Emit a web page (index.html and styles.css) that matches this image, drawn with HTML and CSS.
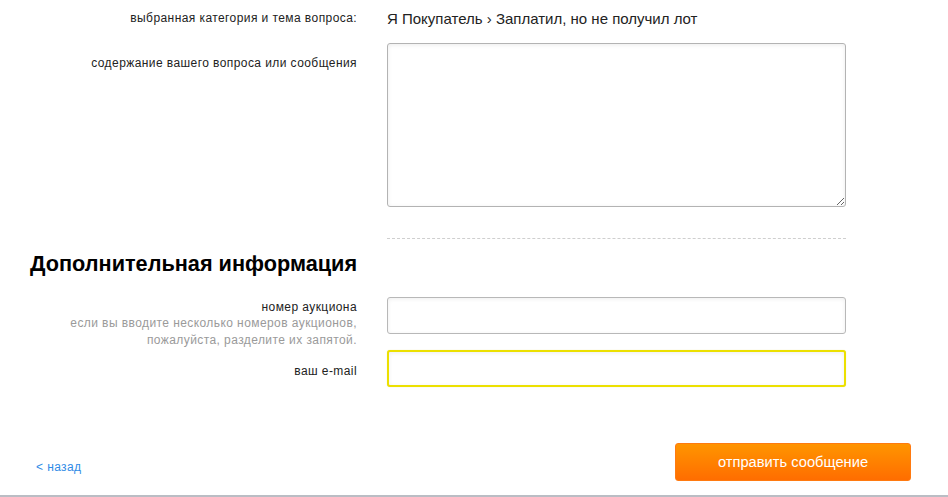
FILE: index.html
```html
<!DOCTYPE html>
<html lang="ru">
<head>
<meta charset="utf-8">
<title>Форма</title>
<link rel="stylesheet" href="styles.css">
</head>
<body>
<div class="page">
  <div class="row row-topic">
    <div class="label">выбранная категория и тема вопроса:</div>
    <div class="value">Я Покупатель › Заплатил, но не получил лот</div>
  </div>
  <div class="row row-message">
    <div class="label label-msg">содержание вашего вопроса или сообщения</div>
    <div class="field"><textarea class="textarea"></textarea></div>
  </div>
  <div class="divider"></div>
  <h2 class="heading">Дополнительная информация</h2>
  <div class="row row-auction">
    <div class="label label-auction">номер аукциона
      <div class="hint">если вы вводите несколько номеров аукционов,<br>пожалуйста, разделите их запятой.</div>
    </div>
    <div class="field"><input class="input" type="text"></div>
  </div>
  <div class="row row-email">
    <div class="label label-email">ваш e-mail</div>
    <div class="field"><input class="input input-focus" type="text"></div>
  </div>
  <div class="footer">
    <a class="back" href="#">&lt; назад</a>
    <button class="submit" type="button">отправить сообщение</button>
  </div>
  <div class="bottom-line"></div>
</div>
</body>
</html>
```
FILE: styles.css
```css
html, body {
  margin: 0;
  padding: 0;
  background: #fff;
}
body {
  font-family: "Liberation Sans", Arial, sans-serif;
  color: #222;
}
.page {
  width: 948px;
}
.row {
  display: grid;
  grid-template-columns: 357px 459px;
  column-gap: 30px;
}
.label {
  font-size: 12px;
  line-height: 16px;
  letter-spacing: 0.42px;
  text-align: right;
  color: #222;
}
.row-topic {
  padding-top: 9px;
}
.row-topic .label {
  padding-top: 1px;
}
.value {
  font-size: 15px;
  line-height: 20px;
  color: #222;
}
.row-message {
  margin-top: 14px;
}
.label-msg {
  padding-top: 12px;
}
.field {
  display: flex;
}
.textarea {
  box-sizing: border-box;
  width: 459px;
  height: 164px;
  margin: 0;
  border: 1px solid #b3b3b3;
  border-radius: 3px;
  box-shadow: inset 0 1px 4px rgba(0, 0, 0, 0.08);
  resize: both;
  font-family: inherit;
  display: block;
}
.divider {
  margin: 31px 0 0 387px;
  width: 459px;
  border-top: 1px dashed #cfcfcf;
}
.heading {
  margin: 12px 0 0 0;
  padding-left: 30px;
  font-size: 21.7px;
  line-height: 26px;
  font-weight: bold;
  color: #000;
}
.row-auction {
  margin-top: 20px;
}
.label-auction {
  padding-top: 2px;
  padding-bottom: 1px;
}
.hint {
  color: #9a9a9a;
  line-height: 17px;
}
.input {
  box-sizing: border-box;
  width: 459px;
  height: 37px;
  margin: 0;
  border: 1px solid #b8b8b8;
  border-radius: 3px;
  box-shadow: inset 0 1px 4px rgba(0, 0, 0, 0.07);
  outline: none;
  font-family: inherit;
  font-size: 14px;
  padding: 0 8px;
}
.input-focus {
  border: 2px solid #ece000;
  box-shadow: inset 0 1px 4px rgba(0, 0, 0, 0.07), 0 0 1px #e8e08a;
}
.label-email {
  padding-top: 13px;
}
.footer {
  margin-top: 56px;
  display: flex;
  justify-content: space-between;
  align-items: flex-start;
  padding: 0 37px 0 36px;
}
.back {
  margin-top: 16px;
  font-size: 12px;
  line-height: 16px;
  letter-spacing: 0.4px;
  color: #2f8be6;
  text-decoration: none;
}
.submit {
  box-sizing: border-box;
  width: 236px;
  height: 38px;
  border: 1px solid #ff7a10;
  border-radius: 3px;
  background: linear-gradient(to bottom, #ff9500 0%, #ff6d00 100%);
  color: #fff;
  font-family: inherit;
  font-size: 14.7px;
  padding: 0;
  cursor: pointer;
}
.bottom-line {
  margin-top: 14px;
  height: 2px;
  background: #babdc4;
}
```
